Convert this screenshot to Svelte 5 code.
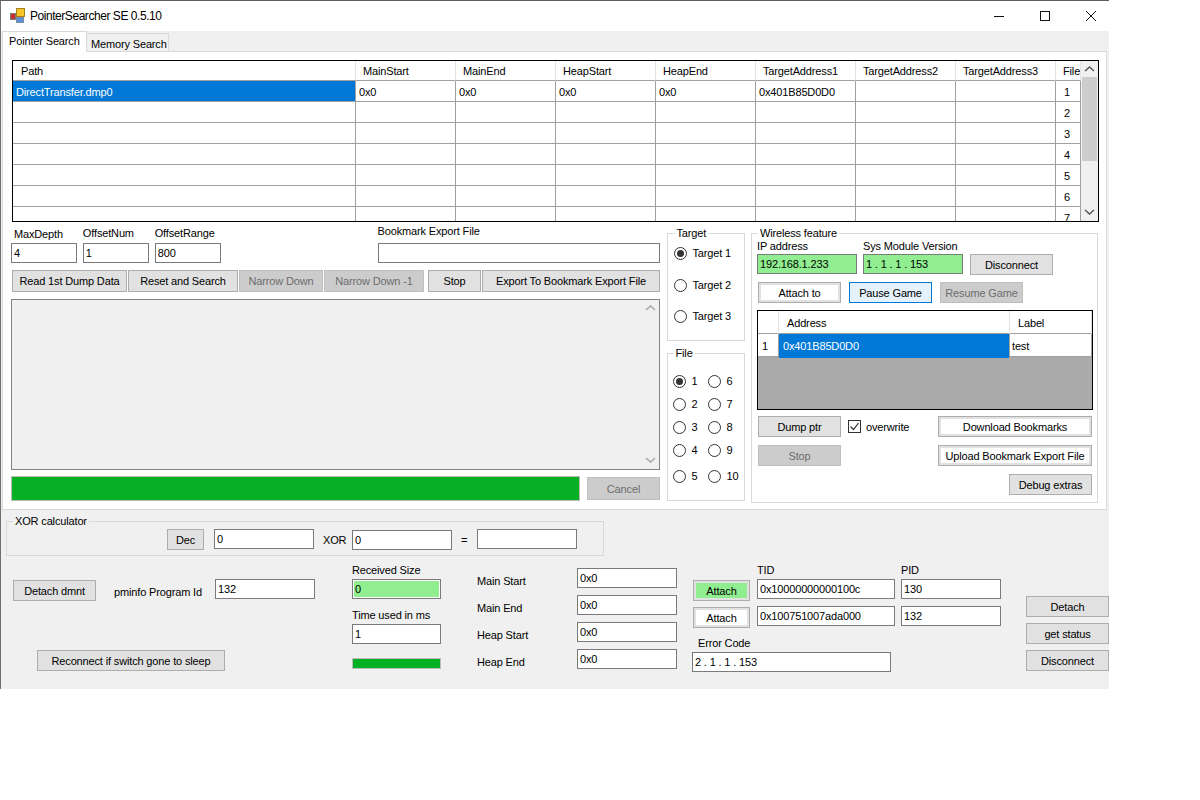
<script>
  const columns = ['MainStart', 'MainEnd', 'HeapStart', 'HeapEnd', 'TargetAddress1', 'TargetAddress2', 'TargetAddress3'];
  const firstRow = ['0x0', '0x0', '0x0', '0x0', '0x401B85D0D0', '', ''];
  const rows = [2, 3, 4, 5, 6, 7];
  const fileRadios = [[1, 6], [2, 7], [3, 8], [4, 9], [5, 10]];
  const regions = [
    { label: 'Main Start', value: '0x0' },
    { label: 'Main End', value: '0x0' },
    { label: 'Heap Start', value: '0x0' },
    { label: 'Heap End', value: '0x0' }
  ];
</script>

<div class="window">
  <header class="titlebar">
    <svg class="app-icon" width="16" height="16" viewBox="0 0 16 16">
      <rect x="6.5" y="0.5" width="8" height="8" fill="#f6c629" stroke="#a8801a" />
      <rect x="0.5" y="5.5" width="5" height="6" fill="#c8342c" stroke="#7a7a7a" />
      <rect x="6.5" y="9.5" width="7" height="5" fill="#5b8fd8" stroke="#7a8ca8" />
    </svg>
    <span class="title">PointerSearcher SE 0.5.10</span>
    <div class="window-controls">
      <svg width="46" height="30" viewBox="0 0 46 30"><path d="M18 15.5h10" stroke="#111" fill="none" /></svg>
      <svg width="46" height="30" viewBox="0 0 46 30"><rect x="18.5" y="10.5" width="9" height="9" stroke="#111" fill="none" /></svg>
      <svg width="46" height="30" viewBox="0 0 46 30"><path d="M18 10l10 10M28 10l-10 10" stroke="#111" fill="none" /></svg>
    </div>
  </header>

  <nav class="tabs">
    <div class="tab active">Pointer Search</div>
    <div class="tab">Memory Search</div>
  </nav>

  <section class="tab-panel">
    <div class="dump-grid">
      <div class="dump-table">
        <div class="cell head path">Path</div>
        {#each columns as c}<div class="cell head">{c}</div>{/each}
        <div class="cell head file">File</div>

        <div class="cell path selected">DirectTransfer.dmp0</div>
        {#each firstRow as v}<div class="cell">{v}</div>{/each}
        <div class="cell file">1</div>

        {#each rows as n}
          <div class="cell path"></div>
          {#each columns as c}<div class="cell"></div>{/each}
          <div class="cell file">{n}</div>
        {/each}
      </div>
      <div class="scrollbar">
        <svg class="top-arrow" width="17" height="17" viewBox="0 0 17 17"><path d="M4 10l4.500-4 4.500 4" stroke="#555" stroke-width="1.500" fill="none" /></svg>
        <div class="thumb"></div>
        <svg class="bottom-arrow" width="17" height="17" viewBox="0 0 17 17"><path d="M4 6l4.500 4 4.500-4" stroke="#555" stroke-width="1.500" fill="none" /></svg>
      </div>
    </div>

    <div class="controls">
      <div class="search-col">
        <div class="fields">
          <label class="field depth"><span>MaxDepth</span><input value="4" readonly /></label>
          <label class="field"><span>OffsetNum</span><input value="1" readonly /></label>
          <label class="field"><span>OffsetRange</span><input value="800" readonly /></label>
          <label class="field bookmark"><span>Bookmark Export File</span><input value="" readonly /></label>
        </div>
        <div class="actions">
          <button style="width:115px">Read 1st Dump Data</button>
          <button style="width:110px">Reset and Search</button>
          <button class="off" style="width:84px">Narrow Down</button>
          <button class="off" style="width:100px">Narrow Down -1</button>
          <button class="stop-btn" style="width:53px">Stop</button>
          <button style="width:178px">Export To Bookmark Export File</button>
        </div>
        <div class="log">
          <div class="scrollbar log-bar">
            <svg width="17" height="17" viewBox="0 0 17 17"><path d="M4 10l4.500-4 4.500 4" stroke="#a6a6a6" stroke-width="1.500" fill="none" /></svg>
            <svg class="bottom-arrow" width="17" height="17" viewBox="0 0 17 17"><path d="M4 6l4.500 4 4.500-4" stroke="#a6a6a6" stroke-width="1.500" fill="none" /></svg>
          </div>
        </div>
        <div class="progress-row">
          <div class="progress"></div>
          <button class="off cancel">Cancel</button>
        </div>
      </div>

      <div class="radio-col">
        <fieldset class="target-group">
          <legend>Target</legend>
          <div class="radio-line"><span class="radio checked"></span>Target 1</div>
          <div class="radio-line"><span class="radio"></span>Target 2</div>
          <div class="radio-line"><span class="radio"></span>Target 3</div>
        </fieldset>
        <fieldset class="file-group">
          <legend>File</legend>
          {#each fileRadios as pair, i}
            <div class="file-row" class:last={i === 4}>
              {#each pair as n}
                <div class="file-radio"><span class="radio" class:checked={n === 1}></span>{n}</div>
              {/each}
            </div>
          {/each}
        </fieldset>
      </div>

      <fieldset class="wireless">
        <legend>Wireless feature</legend>
        <div class="net-row">
          <label class="field"><span>IP address</span><input class="ok" value="192.168.1.233" readonly /></label>
          <label class="field"><span>Sys Module Version</span><input class="ok" value="1 . 1 . 1 . 153" readonly /></label>
          <button class="wide">Disconnect</button>
        </div>
        <div class="game-row">
          <button class="wide framed">Attach to</button>
          <button class="wide hot">Pause Game</button>
          <button class="wide off">Resume Game</button>
        </div>
        <div class="bookmarks">
          <div class="bm-row bm-head"><div></div><div class="pad">Address</div><div class="pad">Label</div></div>
          <div class="bm-row bm-data"><div class="idx">1</div><div class="selected">0x401B85D0D0</div><div class="note">test</div></div>
        </div>
        <div class="bm-actions">
          <button class="wide">Dump ptr</button>
          <span class="check">
            <svg width="13" height="13" viewBox="0 0 13 13"><rect x="0.500" y="0.500" width="12" height="12" fill="#fff" stroke="#333" /><path d="M2.500 6.500l3 3 5-6.500" stroke="#333" stroke-width="1.200" fill="none" /></svg>
            overwrite
          </span>
          <button class="long framed">Download Bookmarks</button>
        </div>
        <div class="bm-actions">
          <button class="wide off">Stop</button>
          <button class="long framed">Upload Bookmark Export File</button>
        </div>
        <div class="bm-actions">
          <button class="wide debug">Debug extras</button>
        </div>
      </fieldset>
    </div>
  </section>

  <section class="bottom">
    <fieldset class="xor">
      <legend>XOR calculator</legend>
      <div class="xor-row">
        <button class="dec">Dec</button>
        <input class="xor-in" value="0" readonly />
        <span class="xor-label">XOR</span>
        <input class="xor-in nudge" value="0" readonly />
        <span class="eq">=</span>
        <input class="xor-in" value="" readonly />
      </div>
    </fieldset>

    <div class="lower">
      <div class="dmnt-col">
        <div class="dmnt-row">
          <button class="wide">Detach dmnt</button>
          <span class="pm-label">pminfo Program Id</span>
          <input class="w100" value="132" readonly />
        </div>
        <button class="reconnect">Reconnect if switch gone to sleep</button>
      </div>

      <div class="recv-col">
        <label class="field"><span>Received Size</span><input class="ok inner" value="0" readonly /></label>
        <label class="field time"><span>Time used in ms</span><input value="1" readonly /></label>
        <div class="mini-progress"></div>
      </div>

      <div class="region-col">
        {#each regions as r}
          <div class="region-row"><span>{r.label}</span><input class="w100" value={r.value} readonly /></div>
        {/each}
      </div>

      <div class="tid-col">
        <div class="tid-grid">
          <span></span><span class="cap">TID</span><span class="cap">PID</span>
          <button class="attach framed green">Attach</button>
          <input class="tid" value="0x10000000000100c" readonly />
          <input class="w100" value="130" readonly />
          <button class="attach framed">Attach</button>
          <input class="tid" value="0x100751007ada000" readonly />
          <input class="w100" value="132" readonly />
        </div>
        <label class="field error"><span>Error Code</span><input value="2 . 1 . 1 . 153" readonly /></label>
      </div>

      <div class="status-col">
        <button class="wide">Detach</button>
        <button class="wide">get status</button>
        <button class="wide">Disconnect</button>
      </div>
    </div>
  </section>
</div>

<style>
  :global(body) {
    background: #fff;
  }

  .window {
    width: 1108px;
    height: 688px;
    display: flex;
    flex-direction: column;
    background: #f0f0f0;
    border-top: 1px solid #5e5e5e;
    border-left: 1px solid #707070;
    font: 11px/14px "Liberation Sans", Arial, sans-serif;
    letter-spacing: -0.15px;
    color: #000;
  }

  .titlebar {
    height: 30px;
    flex: none;
    display: flex;
    align-items: center;
    background: #fff;
    padding-left: 9px;
  }

  .title {
    margin-left: 4px;
    font-size: 12px;
    letter-spacing: -0.45px;
  }

  .window-controls {
    margin-left: auto;
    display: flex;
    margin-right: -5px;
  }

  .window-controls svg {
    display: block;
  }

  .tabs {
    height: 21px;
    flex: none;
    display: flex;
    padding-left: 1px;
    position: relative;
    z-index: 1;
    white-space: nowrap;
  }

  .tab {
    height: 19px;
    margin-top: 2px;
    padding: 3px 0 0 4px;
    box-sizing: border-box;
    background: #f0f0f0;
    border: 1px solid #d9d9d9;
    border-left: 0;
    width: 82px;
  }

  .tab.active {
    height: 21px;
    margin-top: 0;
    width: 85px;
    padding: 2px 0 0 6px;
    background: #fff;
    border-left: 1px solid #d9d9d9;
    border-bottom: 0;
  }

  .tab-panel {
    box-sizing: border-box;
    height: 459px;
    flex: none;
    margin: -1px 2px 0 1px;
    padding: 8px 8px 0 8px;
    background: #fff;
    border: 1px solid #d9d9d9;
  }

  .dump-grid {
    box-sizing: border-box;
    width: 1087px;
    height: 162px;
    margin-left: 1px;
    display: flex;
    border: 1px solid #000;
    overflow: hidden;
    background: #fff;
  }

  .dump-table {
    display: grid;
    grid-template-columns: 343px repeat(7, 100px) 25px;
    grid-template-rows: 20px;
    grid-auto-rows: 21px;
    flex: none;
    align-content: start;
    overflow: hidden;
  }

  .cell {
    box-sizing: border-box;
    padding: 4px 0 0 3px;
    border-right: 1px solid #a0a0a0;
    border-bottom: 1px solid #a0a0a0;
    white-space: nowrap;
    overflow: hidden;
  }

  .cell.head {
    padding: 3px 0 0 7px;
    border-right-color: #e3e3e3;
  }

  .cell.head.path {
    padding-left: 8px;
  }

  .cell.file {
    padding-left: 8px;
  }

  .cell.file.head {
    padding-left: 7px;
  }

  .selected {
    background: #0078d7;
    color: #fff;
  }

  .scrollbar {
    width: 17px;
    flex: none;
    position: relative;
    background: #f0f0f0;
  }

  .scrollbar svg {
    display: block;
  }

  .top-arrow {
    margin-bottom: -1px;
  }

  .bottom-arrow {
    position: absolute;
    bottom: 0;
    left: 0;
  }

  .thumb {
    height: 84px;
    width: 15px;
    margin-left: 1px;
    background: #cdcdcd;
  }

  .controls {
    display: grid;
    grid-template-columns: 649px 78px 347px;
    column-gap: 6.500px;
    margin-top: 4px;
  }

  .search-col {
    display: flex;
    flex-direction: column;
  }

  .fields {
    display: flex;
    gap: 6px;
    align-items: flex-end;
    height: 37px;
  }

  .field {
    display: flex;
    flex-direction: column;
    gap: 3px;
  }

  .fields .field {
    width: 66px;
  }

  .fields .field span {
    white-space: nowrap;
  }

  .fields .depth {
    gap: 2px;
  }

  .fields .depth span {
    padding-left: 3px;
  }

  .fields .bookmark {
    width: 283px;
    margin-left: 151px;
    gap: 5px;
  }

  input {
    box-sizing: border-box;
    height: 20px;
    width: 100%;
    padding: 0 0 1px 2px;
    margin: 0;
    border: 1px solid #7a7a7a;
    border-radius: 0;
    background: #fff;
    font: inherit;
    letter-spacing: inherit;
    color: #000;
    outline: none;
  }

  input.ok {
    background: #90ee90;
  }

  input.inner {
    box-shadow: inset 0 0 0 1px #fff;
  }

  button {
    box-sizing: border-box;
    height: 22px;
    padding: 0;
    border: 1px solid #adadad;
    border-radius: 0;
    background: #e1e1e1;
    font: inherit;
    letter-spacing: inherit;
    color: #000;
    white-space: nowrap;
  }

  button.off {
    background: #cccccc;
    border-color: #bfbfbf;
    color: #6d6d6d;
  }

  button.framed {
    background: #fff;
    box-shadow: inset 0 0 0 2px #e1e1e1;
  }

  button.hot {
    background: #e5f1fb;
    border-color: #0078d7;
  }

  button.wide {
    width: 83px;
    height: 21px;
  }

  .actions {
    display: flex;
    gap: 1px;
    margin-top: 7px;
    margin-left: 1px;
  }

  .stop-btn {
    margin-left: 3px;
  }

  .log {
    box-sizing: border-box;
    height: 171px;
    margin-top: 7px;
    background: #f0f0f0;
    border: 1px solid #828282;
    display: flex;
    justify-content: flex-end;
  }

  .log-bar {
    height: 100%;
  }

  .progress-row {
    display: flex;
    align-items: center;
    justify-content: space-between;
    margin-top: 6px;
  }

  .progress {
    box-sizing: border-box;
    width: 569px;
    height: 25px;
    background: #06b025;
    border: 1px solid #bcbcbc;
  }

  .cancel {
    width: 73px;
    height: 23px;
  }

  .radio-col {
    display: flex;
    flex-direction: column;
    gap: 5px;
  }

  fieldset {
    box-sizing: border-box;
    margin: 0;
    padding: 0;
    min-width: 0;
    border: 1px solid #d9d9d9;
  }

  legend {
    padding: 0 2px;
    margin-left: 6px;
  }

  .target-group {
    height: 115px;
    padding: 6px 0 0 6px;
  }

  .target-group legend {
    margin-left: 1px;
  }

  .radio-line {
    display: flex;
    align-items: center;
    gap: 6px;
    height: 14px;
    margin-bottom: 18px;
  }

  .radio-line:nth-of-type(2) {
    margin-bottom: 17px;
  }

  .radio {
    box-sizing: border-box;
    flex: none;
    position: relative;
    width: 13px;
    height: 13px;
    border: 1px solid #333;
    border-radius: 50%;
    background: #fff;
  }

  .radio.checked::after {
    content: "";
    position: absolute;
    inset: 2px;
    border-radius: 50%;
    background: #333;
  }

  .file-group {
    height: 155px;
    padding: 14px 0 0 5px;
  }

  .file-group legend {
    margin-left: 1px;
  }

  .file-row {
    display: grid;
    grid-template-columns: 35px 35px;
    height: 23px;
  }

  .file-row.last {
    margin-top: 3px;
  }

  .file-radio {
    display: flex;
    align-items: center;
    gap: 6px;
    height: 14px;
  }

  .wireless {
    height: 277px;
    padding: 0 5px;
  }

  .wireless legend {
    margin-left: 1px;
  }

  .net-row {
    display: flex;
    align-items: flex-end;
    gap: 6px;
    margin-top: -1px;
  }

  .net-row .field {
    width: 100px;
    gap: 1px;
  }

  .net-row .field span {
    white-space: nowrap;
  }

  .net-row button {
    margin-left: 1px;
    margin-bottom: -1px;
  }

  .game-row {
    display: flex;
    gap: 8px;
    margin: 8px 0 0 1px;
  }

  .bookmarks {
    box-sizing: border-box;
    width: 336px;
    height: 100px;
    margin-top: 7px;
    background: #ababab;
    border: 1px solid #000;
  }

  .bm-row {
    display: grid;
    grid-template-columns: 21px 231px 1fr;
    background: #fff;
  }

  .bm-head {
    height: 22px;
    border-bottom: 1px solid #a0a0a0;
    line-height: 24px;
  }

  .bm-head > div {
    border-right: 1px solid #e3e3e3;
  }

  .bm-data {
    height: 22px;
    line-height: 24px;
    border-bottom: 1px solid #a0a0a0;
  }

  .bm-data > div {
    border-right: 1px solid #a0a0a0;
  }

  .bm-data .idx {
    padding-left: 4px;
  }

  .bm-data .selected {
    padding-left: 4px;
  }

  .bm-data .note {
    padding-left: 2px;
  }

  .pad {
    padding-left: 8px;
  }

  .bm-actions {
    display: flex;
    align-items: center;
    margin: 6px 0 0 1px;
    width: 334px;
    height: 21px;
  }

  .bm-actions + .bm-actions {
    margin-top: 8px;
  }

  .check {
    display: flex;
    align-items: center;
    gap: 5px;
    margin-left: 7px;
  }

  .check svg {
    display: block;
  }

  button.long {
    width: 154px;
    height: 21px;
    margin-left: auto;
  }

  button.debug {
    margin-left: auto;
  }

  .bottom {
    flex: 1;
    padding-top: 4px;
  }

  .xor {
    width: 598px;
    height: 42px;
    margin-left: 5px;
  }

  .xor-row {
    display: flex;
    align-items: center;
    padding: 1px 0 0 160px;
  }

  .dec {
    width: 37px;
    height: 21px;
    margin-right: 10px;
  }

  .xor-in {
    width: 100px;
    margin-top: -1px;
  }

  .xor-in.nudge {
    margin-top: 1px;
  }

  .xor-label {
    width: 29px;
    margin-left: 9px;
  }

  .eq {
    width: 16px;
    margin-left: 9px;
  }

  .lower {
    display: flex;
    align-items: flex-start;
    margin-top: 3px;
    padding-left: 12px;
  }

  .dmnt-col {
    width: 339px;
    flex: none;
    padding-top: 20px;
  }

  .dmnt-row {
    display: flex;
    align-items: flex-start;
  }

  .dmnt-row button {
    margin-top: 1px;
  }

  .pm-label {
    width: 101px;
    margin: 6px 0 0 18px;
    white-space: nowrap;
  }

  .w100 {
    width: 100px;
    flex: none;
  }

  .reconnect {
    display: block;
    width: 188px;
    height: 21px;
    margin: 49px 0 0 24px;
  }

  .recv-col {
    width: 89px;
    flex: none;
    padding-top: 4px;
  }

  .recv-col .field {
    gap: 2px;
  }

  .recv-col .time {
    margin-top: 9px;
  }

  .mini-progress {
    box-sizing: border-box;
    height: 11px;
    margin-top: 14px;
    background: #06b025;
    border: 1px solid #bcbcbc;
  }

  .region-col {
    width: 200px;
    flex: none;
    margin-left: 36px;
    padding-top: 9px;
    display: flex;
    flex-direction: column;
    gap: 7px;
  }

  .region-row {
    display: flex;
    justify-content: space-between;
    height: 20px;
  }

  .region-row span {
    padding-top: 6px;
  }

  .tid-col {
    width: 308px;
    flex: none;
    margin-left: 16px;
  }

  .tid-grid {
    display: grid;
    grid-template-columns: 58px 138px 100px;
    column-gap: 6px;
    row-gap: 5px;
    align-items: start;
    padding-top: 4px;
  }

  .cap {
    margin-bottom: -3px;
  }

  .attach {
    width: 57px;
    height: 21px;
    margin-top: 1px;
  }

  .tid {
    width: 138px;
  }

  button.green {
    background: #90ee90;
  }

  .field.error {
    width: 199px;
    margin: 8px 0 0 -1px;
    gap: 2px;
  }

  .field.error span {
    padding-left: 6px;
  }

  .status-col {
    display: flex;
    flex-direction: column;
    gap: 6px;
    margin-left: 25px;
    padding-top: 37px;
  }
</style>
